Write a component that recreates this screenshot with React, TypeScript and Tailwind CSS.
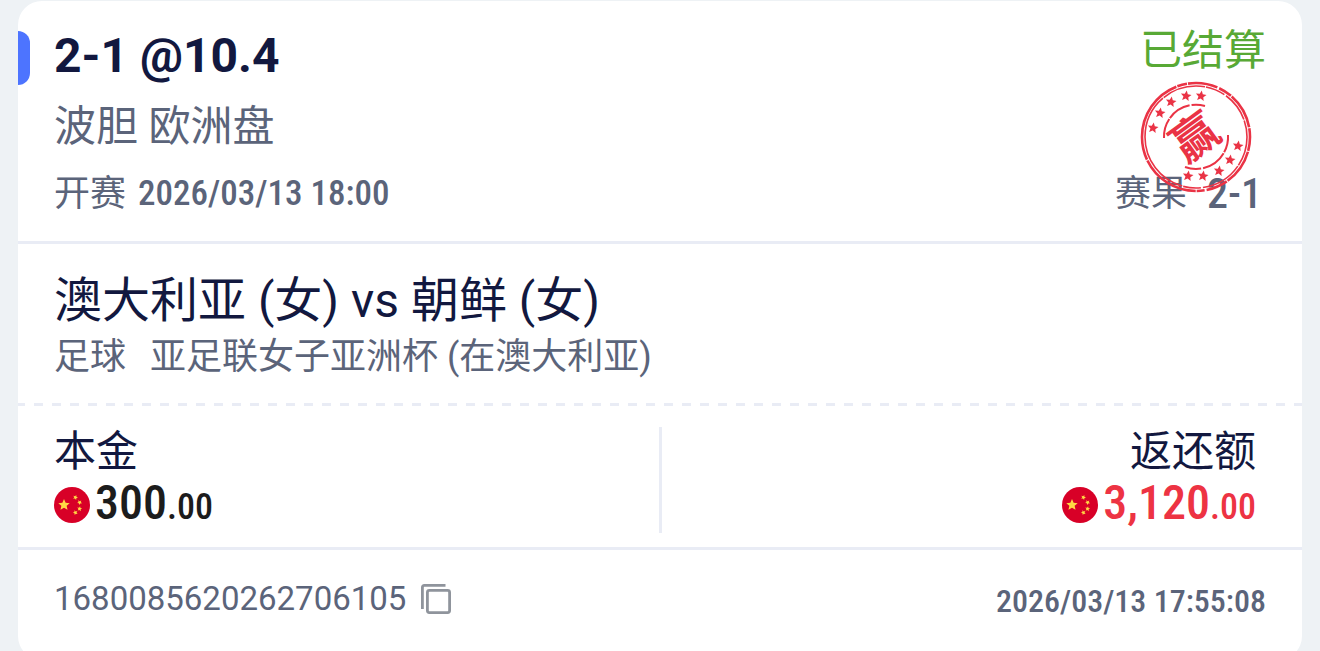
const STAMP_RED = "#ea3345";

// star centres on the stamp, in its own 112 x 112 box
const stampStars = [
  [61, 15],
  [46, 15],
  [31, 21],
  [20, 32],
  [13, 47],
  [98, 65],
  [90, 79],
  [79, 90],
  [63, 95],
  [48, 95],
];

const starPoints = (cx: number, cy: number, radius: number, turn = 0) => {
  const points: string[] = [];
  for (let i = 0; i < 10; i++) {
    const r = i % 2 === 0 ? radius : radius * 0.46;
    const angle = ((i * 36 - 90 + turn) * Math.PI) / 180;
    points.push(`${cx + r * Math.cos(angle)},${cy + r * Math.sin(angle)}`);
  }
  return points.join(" ");
};

const WinStamp = () => (
  <svg
    viewBox="0 0 112 112"
    className="absolute right-[14px] top-[52px] h-[112px] w-[112px]"
    role="img"
    aria-label="赢"
  >
    <g fill="none" stroke={STAMP_RED}>
      <circle
        cx="56"
        cy="56"
        r="54"
        strokeWidth="2.6"
        strokeDasharray="14 1 36 1 22 2 8 1 60 1 88 1 10 1 30 2"
      />
      <circle
        cx="56"
        cy="56"
        r="51"
        strokeWidth="1.6"
        strokeDasharray="30 1 42 2 18 1 110 1 44 1 20 2"
      />
      <path
        d="M24 57 A32 32 0 0 1 65 25"
        strokeWidth="2"
        strokeDasharray="20 1 24 2 40"
      />
      <path
        d="M88 54 A32 32 0 0 1 45 86"
        strokeWidth="2"
        strokeDasharray="18 1 26 2 40"
      />
    </g>
    {stampStars.map(([x, y]) => (
      <polygon
        key={`${x}-${y}`}
        points={starPoints(x, y, 5.6, 8)}
        fill={STAMP_RED}
      />
    ))}
    <text
      x="55"
      y="72"
      textAnchor="middle"
      fontSize="46"
      fontWeight="700"
      fill={STAMP_RED}
      transform="rotate(-36 56 56)"
      className="font-['Noto_Sans_CJK_SC',sans-serif]"
    >
      赢
    </text>
  </svg>
);

const ChinaFlag = () => (
  <svg viewBox="0 0 36 36" className="h-9 w-9 shrink-0" aria-hidden="true">
    <circle cx="18" cy="18" r="18" fill="#d80027" />
    <g fill="#ffda44">
      <polygon points={starPoints(10, 18, 6)} />
      <polygon points={starPoints(21.4, 10.4, 2.6, 20)} />
      <polygon points={starPoints(25.6, 15.4, 2.6, 40)} />
      <polygon points={starPoints(25.6, 21.8, 2.6, 10)} />
      <polygon points={starPoints(21.4, 25.6, 2.6, 50)} />
    </g>
  </svg>
);

const CopyIcon = () => (
  <svg
    viewBox="0 0 30 30"
    className="h-[30px] w-[30px]"
    fill="none"
    stroke="#8f949c"
    strokeWidth="2.8"
    aria-hidden="true"
  >
    <rect x="6.4" y="6.4" width="22.2" height="22.2" rx="2" />
    <path d="M1.4 25V3.4Q1.4 1.4 3.4 1.4H24.5" />
  </svg>
);

type AmountProps = {
  whole: string;
  cents: string;
  className: string;
};

const Amount = ({ whole, cents, className }: AmountProps) => (
  <div className="flex h-14 items-center gap-[5px]">
    <ChinaFlag />
    <p
      className={`font-['Roboto_Condensed',Roboto,sans-serif] text-[48px] font-medium leading-[54px] ${className}`}
    >
      {whole}
      <span className="text-[36px]">.{cents}</span>
    </p>
  </div>
);

const App = () => {
  return (
    <div className="h-screen overflow-hidden bg-[#eef2f5] px-[18px] pt-px font-[Roboto,'Noto_Sans_CJK_SC',sans-serif]">
      <article className="rounded-3xl bg-white text-[#5b647a]">
        <header className="relative flex justify-between border-b-3 border-[#e9ecf5] px-9 pb-[22px] pt-7">
          <span className="absolute left-0 top-[30px] h-[54px] w-3 rounded-r-xl bg-[#4d74ff]" />
          <div>
            <h1 className="text-[48px] font-bold leading-[54px] text-[#12183f]">
              2-1 @10.4
            </h1>
            <p className="mt-3 text-[42px] leading-[64px]">波胆 欧洲盘</p>
            <p className="mt-2.5 flex items-center gap-3 text-[36px] leading-[50px]">
              开赛
              <time className="font-['Roboto_Condensed',Roboto,sans-serif] text-[35px] font-medium">
                2026/03/13 18:00
              </time>
            </p>
          </div>
          <div className="relative flex flex-col items-end justify-between pt-0.5">
            <p className="text-[42px] leading-[40px] text-[#58a935]">已结算</p>
            <p className="flex items-center gap-5 pr-1 text-[36px] leading-[50px]">
              赛果
              <span className="font-['Roboto_Condensed',Roboto,sans-serif] text-[42px] font-medium leading-[46px]">
                2-1
              </span>
            </p>
            <WinStamp />
          </div>
        </header>

        <section className="px-9 pb-[21px] pt-[26px]">
          <h2 className="text-[48px] leading-[62px] text-[#12183f]">
            澳大利亚 (女) vs 朝鲜 (女)
          </h2>
          <p className="flex gap-6 text-[36px] leading-[50px]">
            <span>足球</span>
            <span>亚足联女子亚洲杯 (在澳大利亚)</span>
          </p>
        </section>

        <div className="h-[3px] bg-[repeating-linear-gradient(90deg,#e9ecf5_0_7px,transparent_7px_16px,#e9ecf5_16px_18px)]" />

        <section className="grid grid-cols-[1fr_3px_1fr] border-b-3 border-[#e9ecf5] px-9 pb-[14px] pt-[21px]">
          <div>
            <h3 className="text-[42px] leading-[50px] text-[#12183f]">本金</h3>
            <Amount whole="300" cents="00" className="text-[#1c1c1c]" />
          </div>
          <span className="bg-[#e9ecf5]" />
          <div className="flex flex-col items-end pr-2.5">
            <h3 className="text-[42px] leading-[50px] text-[#12183f]">
              返还额
            </h3>
            <Amount whole="3,120" cents="00" className="text-[#ed3343]" />
          </div>
        </section>

        <footer className="flex items-center justify-between px-9 pb-[34px] pt-[22px]">
          <div className="flex items-center gap-[15px]">
            <span className="text-[33px] leading-[50px]">
              1680085620262706105
            </span>
            <button type="button" aria-label="复制">
              <CopyIcon />
            </button>
          </div>
          <time className="pt-1 font-['Roboto_Condensed',Roboto,sans-serif] text-[32px] font-medium leading-[50px]">
            2026/03/13 17:55:08
          </time>
        </footer>
      </article>
    </div>
  );
};

export default App;
